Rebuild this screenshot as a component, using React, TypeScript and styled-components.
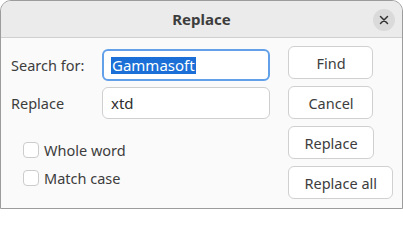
import React from "react";
import styled, { createGlobalStyle } from "styled-components";

const Global = createGlobalStyle`
  html, body { margin: 0; padding: 0; background: #ffffff; }
  * { box-sizing: border-box; }
  body { font-family: "Noto Sans", "Open Sans", sans-serif; }
`;

const Window = styled.div`
  width: 403px;
  height: 209px;
  border: 1px solid #9c9c9c;
  border-radius: 11px 11px 0 0;
  background: #fafafa;
  overflow: hidden;
  display: flex;
  flex-direction: column;
  color: #3d3d3d;
`;

const TitleBar = styled.div`
  height: 37px;
  flex: none;
  background: #ebebeb;
  border-bottom: 1px solid #d0d0d0;
  display: flex;
  align-items: center;
  justify-content: center;
  position: relative;
`;

const Title = styled.div`
  font-weight: 700;
  font-size: 15px;
  color: #3d3d3d;
  margin-top: -1px;
`;

const CloseButton = styled.button`
  position: absolute;
  right: 7px;
  top: 8px;
  width: 22px;
  height: 22px;
  border-radius: 50%;
  border: none;
  background: #dadada;
  padding: 0;
  display: flex;
  align-items: center;
  justify-content: center;
`;

const Body = styled.div`
  flex: 1;
  display: flex;
  padding: 8px 9px 0 10px;
  gap: 18px;
`;

const LeftCol = styled.div`
  flex: 1;
  display: flex;
  flex-direction: column;
  padding-top: 3px;
`;

const FieldGrid = styled.div`
  display: grid;
  grid-template-columns: 91px 1fr;
  row-gap: 6px;
  align-items: center;
`;

const Label = styled.label`
  font-size: 14.5px;
  color: #3d3d3d;
`;

const Entry = styled.div<{ $focused?: boolean }>`
  height: 32px;
  border-radius: 6px;
  background: #ffffff;
  border: ${(p) => (p.$focused ? "2px solid #62a0ea" : "1px solid #cfcfcf")};
  display: flex;
  align-items: center;
  padding-left: ${(p) => (p.$focused ? "7px" : "8px")};
  font-size: 15px;
  color: #2e2e2e;
`;

const Selected = styled.span`
  background: #1c6fd6;
  color: #ffffff;
  padding: 0 1px;
  line-height: 17px;
`;

const Checks = styled.div`
  display: flex;
  flex-direction: column;
  gap: 12px;
  margin-top: 23px;
  padding-left: 12px;
`;

const CheckRow = styled.label`
  display: flex;
  align-items: center;
  gap: 5px;
  font-size: 14.5px;
  height: 16px;
`;

const Box = styled.span`
  width: 16px;
  height: 16px;
  border: 1px solid #cccccc;
  border-radius: 4px;
  background: #ffffff;
`;

const RightCol = styled.div`
  display: flex;
  flex-direction: column;
  align-items: flex-start;
  gap: 7px;
`;

const Button = styled.button`
  height: 33px;
  min-width: 85px;
  padding: 0 15px;
  border: 1px solid #d0d0d0;
  border-radius: 6px;
  background: #ffffff;
  font-family: inherit;
  font-size: 14.5px;
  color: #3d3d3d;
`;

export default function App() {
  return (
    <>
      <Global />
      <Window>
        <TitleBar>
          <Title>Replace</Title>
          <CloseButton aria-label="Close">
            <svg width="10" height="10" viewBox="0 0 10 10">
              <path d="M1.5 1.5 L8.5 8.5 M8.5 1.5 L1.5 8.5" stroke="#333" strokeWidth="1.5" strokeLinecap="round" />
            </svg>
          </CloseButton>
        </TitleBar>
        <Body>
          <LeftCol>
            <FieldGrid>
              <Label>Search for:</Label>
              <Entry $focused>
                <Selected>Gammasoft</Selected>
              </Entry>
              <Label>Replace</Label>
              <Entry>xtd</Entry>
            </FieldGrid>
            <Checks>
              <CheckRow>
                <Box />
                Whole word
              </CheckRow>
              <CheckRow>
                <Box />
                Match case
              </CheckRow>
            </Checks>
          </LeftCol>
          <RightCol>
            <Button>Find</Button>
            <Button>Cancel</Button>
            <Button>Replace</Button>
            <Button>Replace all</Button>
          </RightCol>
        </Body>
      </Window>
    </>
  );
}
